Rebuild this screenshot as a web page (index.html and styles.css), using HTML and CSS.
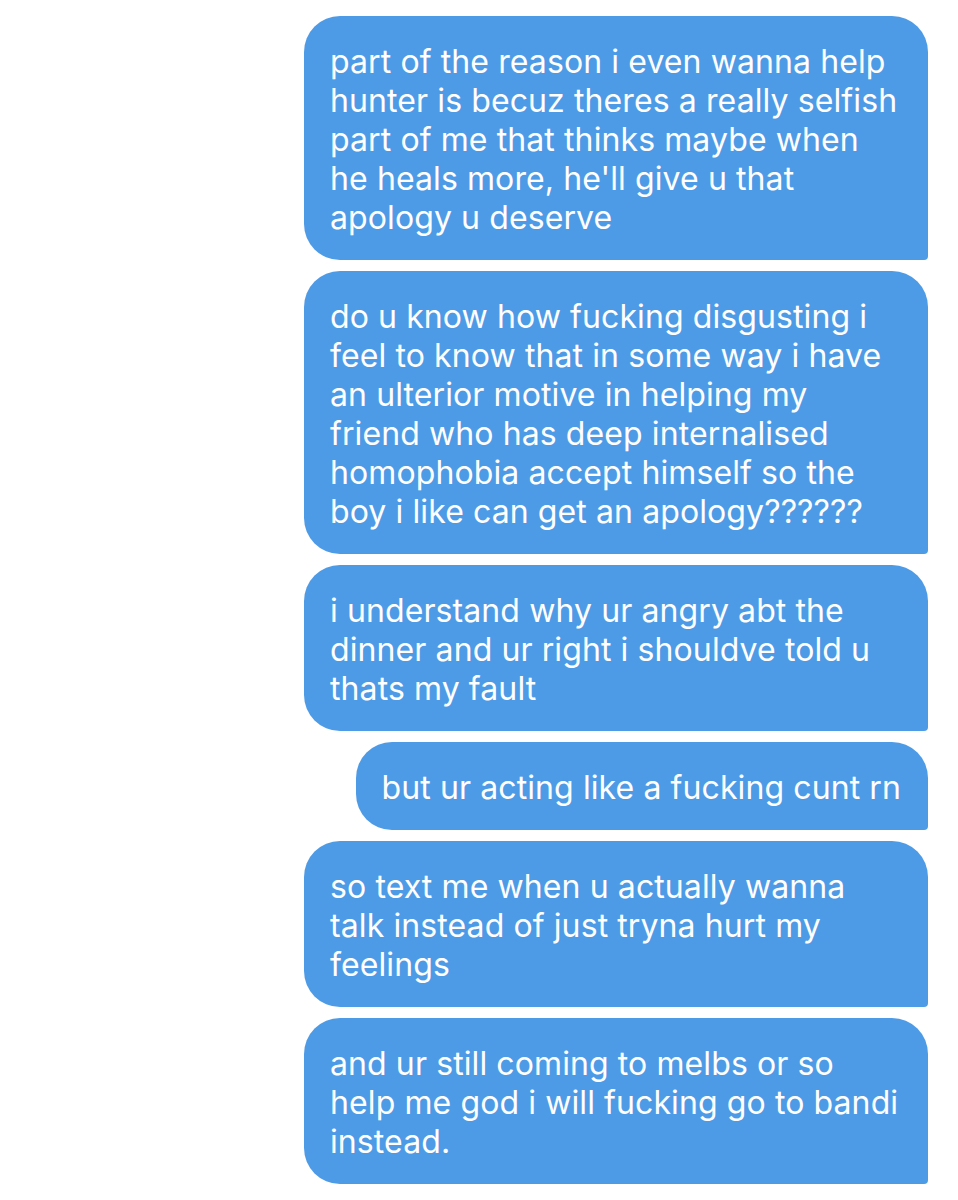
FILE: index.html
```html
<!DOCTYPE html>
<html lang="en">
<head>
<meta charset="utf-8">
<title>Messages</title>
<link rel="stylesheet" href="styles.css">
</head>
<body>
<main class="thread">
  <div class="bubble">part of the reason i even wanna help<br>hunter is becuz theres a really selfish<br>part of me that thinks maybe when<br>he heals more, he'll give u that<br>apology u deserve</div>
  <div class="bubble">do u know how fucking disgusting i<br>feel to know that in some way i have<br>an ulterior motive in helping my<br>friend who has deep internalised<br>homophobia accept himself so the<br>boy i like can get an apology??????</div>
  <div class="bubble">i understand why ur angry abt the<br>dinner and ur right i shouldve told u<br>thats my fault</div>
  <div class="bubble short">but ur acting like a fucking cunt rn</div>
  <div class="bubble">so text me when u actually wanna<br>talk instead of just tryna hurt my<br>feelings</div>
  <div class="bubble">and ur still coming to melbs or so<br>help me god i will fucking go to bandi<br>instead.</div>
</main>
</body>
</html>
```

FILE: styles.css
```css
html, body {
  margin: 0;
  padding: 0;
  background: #ffffff;
}

.thread {
  display: flex;
  flex-direction: column;
  align-items: flex-end;
  gap: 11px;
  padding: 16px 30px 0 0;
  font-family: "Inter", "Noto Sans", sans-serif;
}

.bubble {
  box-sizing: border-box;
  width: 624px;
  padding: 26px 26px 23px 26px;
  background: #4d9be7;
  color: #ffffff;
  font-size: 32px;
  line-height: 39px;
  letter-spacing: 0.1px;
  white-space: nowrap;
  border-radius: 36px 36px 4px 36px;
}

.bubble.short {
  width: auto;
  padding-right: 27px;
}
```
